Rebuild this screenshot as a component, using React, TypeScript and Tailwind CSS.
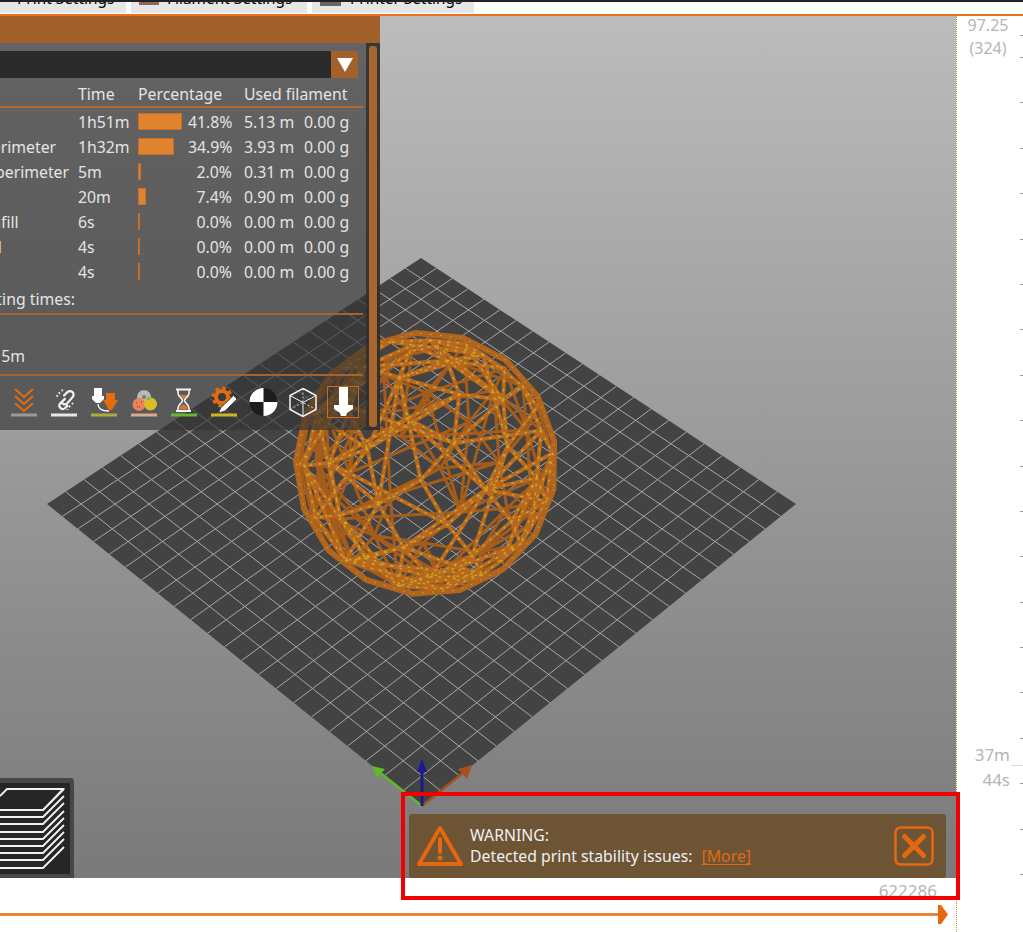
const font = { fontFamily: '"Noto Sans", sans-serif' };

// perspective map of the bed from the unit square onto its four page corners
function bedPoint(u: number, v: number) {
  const [x0, y0, x1, y1, x2, y2, x3, y3] = [421, 258, 796, 504, 422, 806, 47, 504];
  const dx1 = x1 - x2, dx2 = x3 - x2, sx = x0 - x1 + x2 - x3;
  const dy1 = y1 - y2, dy2 = y3 - y2, sy = y0 - y1 + y2 - y3;
  const det = dx1 * dy2 - dx2 * dy1;
  const g = (sx * dy2 - dx2 * sy) / det;
  const h = (dx1 * sy - sx * dy1) / det;
  const w = g * u + h * v + 1;
  return [
    (x1 - x0 + g * x1) * u + (x3 - x0 + h * x3) * v + x0,
    (y1 - y0 + g * y1) * u + (y3 - y0 + h * y3) * v + y0,
  ].map((n) => n / w);
}

const GRID = 22;
function buildGrid() {
  let d = '';
  for (let i = 1; i < GRID; i++) {
    const t = i / GRID;
    const [a, b] = bedPoint(t, 0);
    const [c, e] = bedPoint(t, 1);
    const [f, g] = bedPoint(0, t);
    const [h, j] = bedPoint(1, t);
    d += `M${a} ${b}L${c} ${e}M${f} ${g}L${h} ${j}`;
  }
  return d;
}

// wireframe ball: hubs on a sphere, joined to near hubs plus some long struts
function buildBall() {
  const n = 72;
  const cx = 426, cy = 463.5, r = 127;
  const pts: number[][] = [];
  for (let i = 0; i < n; i++) {
    const y = 1 - (2 * (i + 0.5)) / n;
    const rad = Math.sqrt(1 - y * y);
    const a = i * 2.39996;
    const x = Math.cos(a) * rad;
    const z = Math.sin(a) * rad;
    // tilt towards the viewer
    const y2 = y * 0.82 - z * 0.57;
    const z2 = y * 0.57 + z * 0.82;
    pts.push([cx + x * r, cy - y2 * r, z2, x, y, z]);
  }
  let seed = 11;
  const rnd = () => (seed = (seed * 16807) % 2147483647) / 2147483647;
  let front = '';
  let back = '';
  for (let i = 0; i < n; i++) {
    for (let j = i + 1; j < n; j++) {
      const a = pts[i], b = pts[j];
      const dist = Math.hypot(a[3] - b[3], a[4] - b[4], a[5] - b[5]);
      const low = a[1] > 530 && b[1] > 530;
      const keep = dist < 0.46 || (dist < 1.1 && rnd() < (low ? 0.6 : 0.22));
      if (!keep) continue;
      const seg = `M${a[0].toFixed(1)} ${a[1].toFixed(1)}L${b[0].toFixed(1)} ${b[1].toFixed(1)}`;
      if (a[2] + b[2] > 0) front += seg;
      else back += seg;
    }
  }
  let rim = '';
  for (let i = 0; i < 17; i++) {
    const a = (i / 17) * Math.PI * 2 + 0.2;
    rim += `${i ? 'L' : 'M'}${(cx + Math.cos(a) * 130).toFixed(1)} ${(cy + Math.sin(a) * 131).toFixed(1)}`;
  }
  return { front, back, rim: rim + 'Z' };
}

const gridPath = buildGrid();
const ball = buildBall();

function Scene() {
  return (
    <svg className="absolute inset-0" width="956" height="862" viewBox="0 16 956 862">
      <polygon points="421,258 796,504 422,806 47,504" fill="#434343" />
      <path d={gridPath} stroke="#a8a8a8" strokeWidth="1" fill="none" />
      <g fill="none" strokeLinecap="round" strokeLinejoin="round">
        <path d={ball.back} stroke="#a55c1a" strokeWidth="3" />
        <path d={ball.rim} stroke="#b0641d" strokeWidth="6" />
        <path d={ball.front} stroke="#b8691f" strokeWidth="4" />
        <path d={ball.front} stroke="#cf8a2a" strokeWidth="1" strokeDasharray="2 7" />
        <path d={ball.front} stroke="#c9a81f" strokeWidth="1.5" strokeDasharray="1 8" />
        <path d={ball.rim} stroke="#c9a81f" strokeWidth="1" strokeDasharray="1 9" />
      </g>
      <path d="M422 806L378 771" stroke="#5cba2c" strokeWidth="2.5" />
      <polygon points="372,766 385,769 377,778" fill="#5cba2c" />
      <path d="M422 806L464 772" stroke="#a8501e" strokeWidth="2.5" />
      <polygon points="472,765 467,779 458,769" fill="#a8501e" />
      <path d="M422 806V768" stroke="#1b1b8f" strokeWidth="3" />
      <polygon points="422,759 427,772 417,772" fill="#1b1b8f" />
    </svg>
  );
}

function Bar({ x, color }: { x: number; color: string }) {
  return <rect x={x} y="27.5" width="26" height="3" fill={color} />;
}

const toolbar = [
  // view chevrons
  <>
    <path d="M11 3l9 8 9-8M11 10l9 8 9-8M11 17l9 8 9-8" fill="none" stroke="#e36c0e" strokeWidth="2" />
    <Bar x={7} color="#9a9a9a" />
  </>,
  // broken link
  <>
    <g transform="translate(3 1) scale(.85)">
      <path d="M20 10l4-4a4 4 0 0 1 6 6l-6 7a4 4 0 0 1-6 0M21 14l-6 6a4 4 0 0 0 6 5l3-3" fill="none" stroke="#f2f2f2" strokeWidth="2.6" strokeLinecap="round" />
      <path d="M14 6l1 2M11 10l2 1M18 3l0 2M27 24l-1-2M31 20l-2-1M24 27l0-1" stroke="#f2f2f2" strokeWidth="2" />
    </g>
    <Bar x={7} color="#e6e6e6" />
  </>,
  // filament change
  <>
    <polygon points="10,2 18,2 18,10 20,10 20,13 16,17 12,17 8,13 8,10 10,10" fill="#fff" />
    <polygon points="22,7 31,7 31,14 34,14 28,24 25,24 19,14 22,14" fill="#e36c0e" />
    <path d="M14 18c0 6 6 7 11 7" fill="none" stroke="#fff" strokeWidth="1.3" />
    <Bar x={7} color="#b3a93c" />
  </>,
  // colour print
  <>
    <circle cx="20" cy="11" r="7" fill="#b8b8b8" />
    <circle cx="15" cy="18.500" r="6.500" fill="#e8845c" />
    <circle cx="26.500" cy="18" r="6.500" fill="#d8bc2c" />
    <circle cx="20" cy="11" r="2" fill="#777" />
    <path d="M12 17h1M15 21h1M13 21h1M17 16h1" stroke="#c91f1f" strokeWidth="1.2" />
    <path d="M23 12l2 2M25 11v3" stroke="#5cba2c" strokeWidth="1.2" />
    <Bar x={7} color="#dba98c" />
  </>,
  // print time
  <>
    <path d="M12 3.500h15M12 25h15" stroke="#f4f4f4" strokeWidth="2.200" />
    <path d="M14 4v3c0 4 4.500 5 4.500 7.500S14 18 14 22v3M25 4v3c0 4-4.500 5-4.500 7.500S25 18 25 22v3" fill="none" stroke="#f4f4f4" strokeWidth="1.6" />
    <polygon points="15.500,9 23.500,9 19.500,13" fill="#d9782e" />
    <polygon points="15.500,23.500 23.500,23.500 23.500,21 19.500,18 15.500,21" fill="#d9782e" />
    <Bar x={7} color="#66b832" />
  </>,
  // settings gear and pencil
  <>
    <circle cx="18" cy="11" r="6" fill="none" stroke="#e36c0e" strokeWidth="4" />
    <circle cx="18" cy="11" r="9" fill="none" stroke="#e36c0e" strokeWidth="3" strokeDasharray="3.500 3.570" />
    <path d="M17 21.500L29.500 9.500l3.500 3.500L21 25l-6.500 2z" fill="#fff" stroke="#4a4a4a" strokeWidth="1" />
    <Bar x={7} color="#d0b420" />
  </>,
  // center of gravity
  <>
    <circle cx="19.500" cy="16" r="14" fill="#1d1d1d" />
    <path d="M19.500 16V2a14 14 0 0 0-14 14zM19.500 16v14a14 14 0 0 0 14-14z" fill="#fff" />
  </>,
  // wire cube
  <>
    <path d="M19 2.500L32 9.500V23.500L19 30.500L6 23.500V9.500Z" fill="none" stroke="#f2f2f2" strokeWidth="1.5" />
    <path d="M6 9.500L19 16.500L32 9.500M19 16.500V30.500" fill="none" stroke="#f2f2f2" strokeWidth="1" />
    <path d="M19 2.500V16.500M6 23.500L19 16.500L32 23.500" fill="none" stroke="#f2f2f2" strokeWidth=".8" strokeDasharray="2 2" />
  </>,
  // export gcode
  <>
    <rect x="3.500" y=".5" width="31" height="31" fill="none" stroke="#c96a20" />
    <polygon points="15,1 24,1 24,19 29,19 29,23 23,27 22,30 17,30 16,27 10,23 10,19 15,19" fill="#fff" />
  </>,
];

const rows = [
  ['Perimeter', '1h51m', 'w-[44px]', '41.8%', '5.13 m'],
  ['External perimeter', '1h32m', 'w-[36px]', '34.9%', '3.93 m'],
  ['Overhang perimeter', '5m', 'w-[3px]', '2.0%', '0.31 m'],
  ['Custom', '20m', 'w-[8px]', '7.4%', '0.90 m'],
  ['Top solid infill', '6s', 'w-[2px]', '0.0%', '0.00 m'],
  ['Bridge infill', '4s', 'w-[2px]', '0.0%', '0.00 m'],
  ['Gap fill', '4s', 'w-[2px]', '0.0%', '0.00 m'],
];

const rowGrid = 'grid grid-cols-[161px_60px_50px_44px_12px_60px_1fr] items-center -ml-[83px]';

function StatsPanel() {
  return (
    <div className="absolute left-0 top-0 flex h-[414px] w-[380px] flex-col overflow-hidden">
      <div className="h-[27px] shrink-0 bg-[#a2602b]" />
      <div className="flex min-h-0 flex-1 bg-[#343434]/65 text-[15.800px] text-[#e4e4e4]">
        <div className="w-[366px] shrink-0">
          <div className="mt-[8px] flex h-[27px]">
            <div className="w-[331px] bg-[#2a2a2a]" />
            <div className="flex w-[27px] items-center justify-center bg-[#a2602b]">
              <svg width="16" height="14" viewBox="0 0 16 14">
                <polygon points="0,0 16,0 8,14" fill="#fff" />
              </svg>
            </div>
          </div>
          <div className="h-[30px] w-[363px] border-b-2 border-[#b5692f]">
            <div className={rowGrid + ' h-[28px] pt-[5px]'}>
              <span />
              <span>Time</span>
              <span className="col-span-3">Percentage</span>
              <span className="col-span-2 whitespace-nowrap">Used filament</span>
            </div>
          </div>
          <div className="w-[363px] pt-[2px]">
            {rows.map((row) => (
              <div key={row[0]} className={rowGrid + ' h-[25px]'}>
                <span className="whitespace-nowrap">{row[0]}</span>
                <span>{row[1]}</span>
                <span className="-mt-[2px] flex h-[17px]">
                  <span className={row[2] + ' h-full border border-[#c56f2a] bg-[#e0832f]'} />
                </span>
                <span className="text-right">{row[3]}</span>
                <span />
                <span>{row[4]}</span>
                <span>0.00 g</span>
              </div>
            ))}
          </div>
          <div className="flex h-[30px] w-[363px] border-b-2 border-[#a8622d]">
            <div className="flex w-[75px] justify-end whitespace-nowrap pt-[3px]">Estimated printing times:</div>
          </div>
          <div className="flex h-[61px] w-[363px] items-end border-b-2 border-[#a8622d] pb-[5px]">
            <div className="flex w-[25px] justify-end whitespace-nowrap">Time: 4h 5m</div>
          </div>
          <div className="mt-[10px] flex pl-[4px]">
            {toolbar.map((icon, i) => (
              <svg key={i} width="40" height="32" viewBox="0 0 40 32" className="shrink-0">
                {icon}
              </svg>
            ))}
          </div>
        </div>
        <div className="w-[14px] shrink-0 bg-[#2d2d2d]/80 px-[3px] py-[3px]">
          <div className="h-full rounded-[3px] bg-[#a8652e]" />
        </div>
      </div>
    </div>
  );
}

function LayersButton() {
  const ys = [810, 817, 824, 832, 839, 846, 853, 860, 868];
  return (
    <div className="absolute bottom-0 left-0 h-[100px] w-[74px] rounded-tr-[4px] border-r-[4px] border-t-[5px] border-b-[4px] border-[#474747] bg-[#262626]">
      <svg width="70" height="91" viewBox="0 783 70 91">
        <path d="M0 796L7 789H63L43 810H0" fill="none" stroke="#f2f2f2" strokeWidth="1.8" />
        {ys.slice(1).map((y) => (
          <path key={y} d={`M0 ${y}H43L64 ${y - 21}`} fill="none" stroke="#f2f2f2" strokeWidth="1.8" />
        ))}
        <path d="M43 810L64 789" stroke="#f2f2f2" strokeWidth="1.8" />
      </svg>
    </div>
  );
}

function WarningBox() {
  return (
    <div className="absolute bottom-0 left-[409px] flex h-[64px] w-[537px] items-center rounded-[3px] bg-[#6c5435] pl-[8px] pr-[12px] text-[15.800px] text-[#f0f0f0]">
      <svg width="46" height="42" viewBox="0 0 46 42" className="shrink-0">
        <path d="M23 3L44 39H2Z" fill="none" stroke="#e5680e" strokeWidth="4" strokeLinejoin="round" />
        <path d="M23 14V27" stroke="#e5680e" strokeWidth="4" strokeLinecap="round" />
        <circle cx="23" cy="33" r="2.500" fill="#e5680e" />
      </svg>
      <div className="ml-[7px] flex-1 leading-[21px]">
        <div>WARNING:</div>
        <div>
          Detected print stability issues:
          <span className="ml-[9px] text-[#e5680e] underline underline-offset-2">[More]</span>
        </div>
      </div>
      <svg width="40" height="40" viewBox="0 0 40 40" className="shrink-0">
        <rect x="1.500" y="1.500" width="37" height="37" rx="5" fill="none" stroke="#e5680e" strokeWidth="2.500" />
        <path d="M10.500 10.500L29.500 29.500M29.500 10.500L10.500 29.500" stroke="#e5680e" strokeWidth="5" strokeLinecap="round" />
      </svg>
    </div>
  );
}

function Tabs() {
  return (
    <div className="h-[16px] shrink-0 border-b-2 border-[#e8701f] bg-white">
      <div className="h-[2px] bg-[#222222]" />
      <div className="flex h-[11px] text-[15.400px] leading-[20px] text-black">
        <div className="w-[126px] overflow-hidden bg-[#e6e6e6] pl-[17px]">
          <div className="-mt-[13px] whitespace-nowrap">Print Settings</div>
        </div>
        <div className="ml-[5px] flex w-[176px] overflow-hidden bg-[#e6e6e6] pl-[8px]">
          <div className="h-[3px] w-[20px] shrink-0 bg-[#8a6a55]" />
          <div className="-mt-[13px] ml-[8px] whitespace-nowrap">Filament Settings</div>
        </div>
        <div className="ml-[5px] flex w-[162px] overflow-hidden bg-[#e6e6e6] pl-[8px]">
          <div className="h-[4px] w-[21px] shrink-0 bg-[#666666]" />
          <div className="-mt-[13px] ml-[9px] whitespace-nowrap">Printer Settings</div>
        </div>
      </div>
    </div>
  );
}

function LayerScale() {
  const ticks = Array.from({ length: 19 }, (_, i) => i);
  return (
    <div className="relative flex-1 overflow-hidden bg-white text-[16px] leading-[23px] text-[#b5b5b5]">
      <div className="-mt-[2px] w-[62px] text-center">
        <div>97.25</div>
        <div>(324)</div>
      </div>
      <div className="absolute right-0 top-[19px] flex w-[3px] flex-col">
        <div className="mb-[21px] h-px bg-[#999999]" />
        {ticks.map((t) => (
          <div key={t} className="mb-[44.400px] h-px bg-[#999999]" />
        ))}
      </div>
      <div className="absolute right-[13px] top-[726px] text-right text-[17px] leading-[25px]">
        <div>37m</div>
        <div>44s</div>
      </div>
      <div className="absolute right-0 top-[749px] h-px w-[12px] bg-[#dddddd]" />
    </div>
  );
}

export default function App() {
  return (
    <div className="relative flex h-[932px] w-[1023px] flex-col overflow-hidden bg-white" style={font}>
      <Tabs />
      <div className="flex min-h-0 flex-1">
        <div className="flex w-[957px] shrink-0 flex-col border-r border-dotted border-[#a8a830]">
          <div className="relative h-[862px] shrink-0 overflow-hidden bg-gradient-to-b from-[#bcbcbc] to-[#7a7a7a]">
            <Scene />
            <StatsPanel />
            <LayersButton />
            <WarningBox />
          </div>
          <div className="flex flex-1 flex-col">
            <div className="h-[26px] pr-[19px] pt-[2px] text-right text-[17px] leading-[22px] text-[#b5b5b5]">622286</div>
            <div className="mt-[1px] flex items-center pr-[8px]">
              <div className="h-[3px] flex-1 bg-[#ec8240]" />
              <svg width="10" height="19" viewBox="0 0 10 19">
                <polygon points="0,0 3,0 10,9.500 3,19 0,19" fill="#e5680e" />
              </svg>
            </div>
          </div>
        </div>
        <LayerScale />
      </div>
      <div className="absolute left-[401px] top-[792px] h-[108px] w-[559px] border-[4px] border-[#f00000]" />
    </div>
  );
}
